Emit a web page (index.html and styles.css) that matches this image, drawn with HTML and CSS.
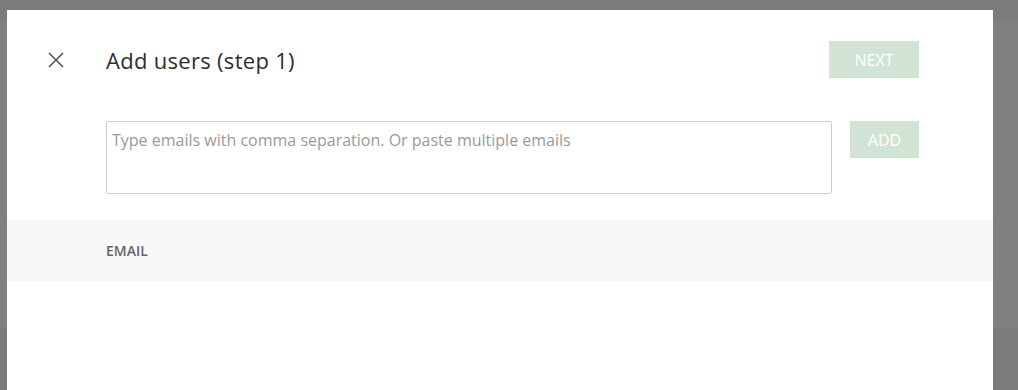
FILE: index.html
```html
<!DOCTYPE html>
<html lang="en">
<head>
    <meta charset="UTF-8">
    <meta name="viewport" content="width=device-width, initial-scale=1.0">
    <title>Add users</title>
    <link rel="stylesheet" href="styles.css">
</head>
<body>
    <div class="modal">
        <div class="modal-header">
            <button class="close" aria-label="Close">
                <svg width="18" height="18" viewBox="0 0 18 18">
                    <path d="M2 2 L16 16 M16 2 L2 16" stroke="#4b5661" stroke-width="1.6" fill="none"/>
                </svg>
            </button>
            <h1 class="title">Add users (step 1)</h1>
            <button class="btn btn-next" disabled>NEXT</button>
        </div>
        <div class="add-row">
            <textarea class="emails" placeholder="Type emails with comma separation. Or paste multiple emails"></textarea>
            <button class="btn btn-add" disabled>ADD</button>
        </div>
        <div class="table-head">
            <span class="col-email">EMAIL</span>
        </div>
    </div>
</body>
</html>
```

FILE: styles.css
```css
body {
    margin: 0;
    height: 390px;
    overflow: hidden;
    background: linear-gradient(to bottom, #7b7b7b 0, #7b7b7b 19px, #808080 19px, #808080 328px, #7b7b7b 328px);
    font-family: "Open Sans", Arial, sans-serif;
}

.modal {
    margin: 10px 0 0 7px;
    width: 986px;
    height: 380px;
    background: #fff;
}

.modal-header {
    display: flex;
    align-items: center;
    padding: 31px 74px 0 40px;
}

.close {
    width: 18px;
    height: 18px;
    padding: 0;
    margin-right: 41px;
    border: none;
    background: none;
    display: flex;
    cursor: pointer;
}

.title {
    flex: 1;
    margin: 0;
    font-size: 22px;
    font-weight: 400;
    letter-spacing: 0.3px;
    color: #2e2e2e;
}

.btn {
    height: 37px;
    border: none;
    border-radius: 0;
    background: #d1e3d5;
    color: #fff;
    font-family: inherit;
    font-size: 16px;
    padding: 0;
}

.btn-next {
    width: 90px;
}

.btn-add {
    width: 69px;
}

.add-row {
    display: flex;
    align-items: flex-start;
    gap: 18px;
    margin-top: 43px;
    padding: 0 74px 0 99px;
}

.emails {
    box-sizing: border-box;
    width: 726px;
    height: 73px;
    margin: 0;
    padding: 7px 5px;
    border: 1px solid #cfcfcf;
    border-radius: 2px;
    resize: none;
    font-family: inherit;
    font-size: 16px;
    line-height: 22px;
    color: #333;
}

.emails::placeholder {
    color: #9a9a9a;
}

.table-head {
    display: flex;
    align-items: center;
    height: 61px;
    margin-top: 26px;
    padding-left: 99px;
    background: #f8f8f8;
}

.col-email {
    font-size: 14px;
    font-weight: 600;
    color: #666;
}
```
